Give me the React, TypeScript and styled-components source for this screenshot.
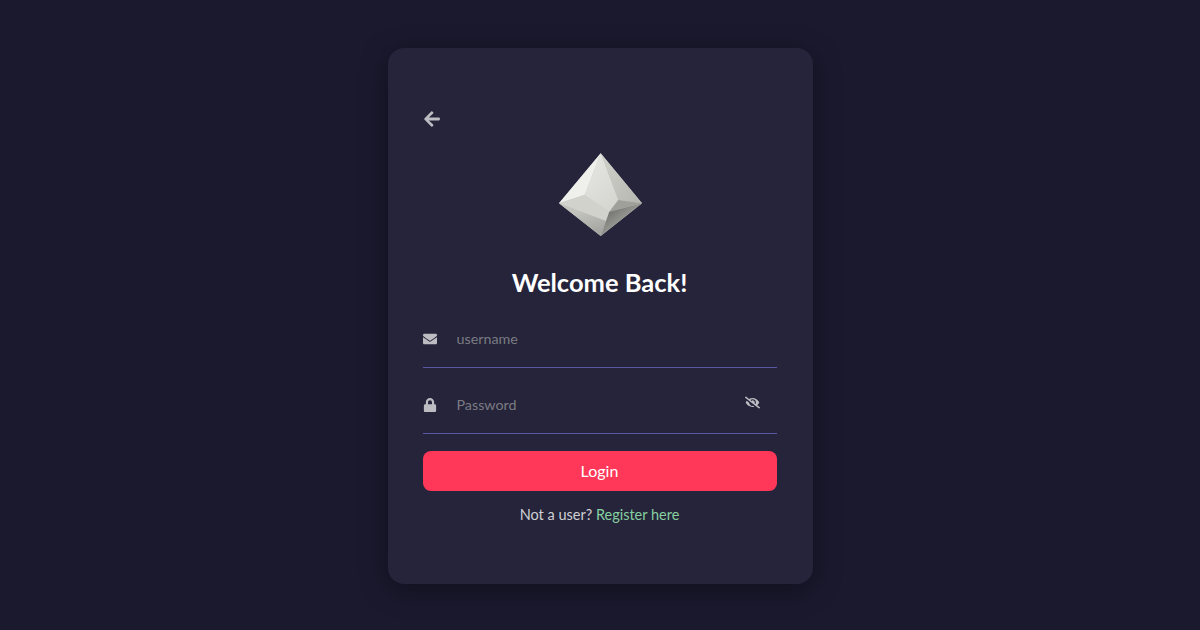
import { useState } from "react";
import styled, { createGlobalStyle } from "styled-components";
import { FaArrowLeft, FaEnvelope, FaEyeSlash, FaLock } from "react-icons/fa";

const GlobalStyle = createGlobalStyle`
  * {
    box-sizing: border-box;
  }
  body {
    margin: 0;
    background-color: #1a192e;
    font-family: Lato, "Noto Sans", sans-serif;
  }
`;

const Gem = () => (
  <GemSvg viewBox="0 0 84 84">
    <defs>
      <linearGradient id="center" x1="0.2" y1="0" x2="0.7" y2="1">
        <stop offset="0" stopColor="#e6e6e2" />
        <stop offset="1" stopColor="#d6d6d1" />
      </linearGradient>
      <linearGradient id="right" x1="0" y1="0" x2="1" y2="1">
        <stop offset="0" stopColor="#d2d2cd" />
        <stop offset="1" stopColor="#b6b6b1" />
      </linearGradient>
      <linearGradient id="lowerRight" x1="0.2" y1="0.1" x2="0.8" y2="0.7">
        <stop offset="0" stopColor="#6c6c68" />
        <stop offset="1" stopColor="#b2b2ad" />
      </linearGradient>
      <linearGradient id="lowerLeft" x1="0.3" y1="0.3" x2="0.6" y2="1">
        <stop offset="0" stopColor="#c4c4bf" />
        <stop offset="1" stopColor="#a4a4a0" />
      </linearGradient>
    </defs>
    <polygon points="42.7,0.3 84,50.3 42.7,83 1,50.3" fill="#c8c8c3" />
    <polygon points="42.7,0.3 1,50.3 26.3,42 28,38.7" fill="#efefeb" />
    <polygon points="42.7,0.3 28,38.7 26.3,42 51.3,58.7 60.3,47" fill="url(#center)" />
    <polygon points="42.7,0.3 60.3,47 84,50.3" fill="url(#right)" />
    <polygon points="1,50.3 26.3,42 51.3,58.7 48,68" fill="#d2d2cd" />
    <polygon points="1,50.3 48,68 42.7,83" fill="url(#lowerLeft)" />
    <polygon points="51.3,58.7 60.3,47 84,50.3" fill="#a0a09b" />
    <polygon points="51.3,58.7 84,50.3 42.7,83 48,68" fill="url(#lowerRight)" />
  </GemSvg>
);

export default function App() {
  const [username, setUsername] = useState("");
  const [password, setPassword] = useState("");

  return (
    <Page>
      <GlobalStyle />
      <Card>
        <BackButton type="button" aria-label="Back">
          <FaArrowLeft />
        </BackButton>
        <LogoWrap>
          <Gem />
        </LogoWrap>
        <Title>Welcome Back!</Title>
        <Field>
          <FieldIcon>
            <FaEnvelope />
          </FieldIcon>
          <Input
            placeholder="username"
            value={username}
            onChange={(e) => setUsername(e.target.value)}
          />
        </Field>
        <Field>
          <FieldIcon>
            <FaLock />
          </FieldIcon>
          <Input
            type="password"
            placeholder="Password"
            value={password}
            onChange={(e) => setPassword(e.target.value)}
          />
          <EyeButton type="button" aria-label="Show password">
            <FaEyeSlash />
          </EyeButton>
        </Field>
        <LoginButton type="button">Login</LoginButton>
        <Footer>
          Not a user? <RegisterLink href="#">Register here</RegisterLink>
        </Footer>
      </Card>
    </Page>
  );
}

const Page = styled.div`
  width: 100%;
  height: 630px;
  display: flex;
  justify-content: center;
  padding-top: 48px;
  overflow: hidden;
`;

const Card = styled.div`
  width: 425px;
  height: 536px;
  padding: 61px 36px 0 35px;
  background-color: #25243a;
  border-radius: 16px;
  box-shadow: 0 6px 28px rgba(0, 0, 0, 0.35);
  display: flex;
  flex-direction: column;
`;

const BackButton = styled.button`
  width: 18px;
  height: 20px;
  padding: 0;
  border: none;
  background: transparent;
  color: #bdbcc2;
  font-size: 18px;
  display: flex;
  align-items: center;
  cursor: pointer;
`;

const LogoWrap = styled.div`
  display: flex;
  justify-content: center;
  margin-top: 24px;
  padding-left: 1px;
`;

const GemSvg = styled.svg`
  width: 84px;
  height: 84px;
  display: block;
`;

const Title = styled.h1`
  margin: 28px 0 1px 0;
  height: 36px;
  line-height: 35px;
  text-align: center;
  color: #ffffff;
  font-size: 25.5px;
  font-weight: 700;
`;

const Field = styled.div`
  height: 66px;
  display: flex;
  align-items: center;
  padding-top: 9px;
  border-bottom: 1px solid #5a5aa4;
`;

const FieldIcon = styled.span`
  width: 34px;
  color: #bdbcc2;
  font-size: 14px;
  display: flex;
  align-items: center;
`;

const Input = styled.input`
  flex: 1;
  min-width: 0;
  margin-bottom: 2px;
  padding: 0;
  border: none;
  outline: none;
  background: transparent;
  color: #ffffff;
  font-family: inherit;
  font-size: 14.3px;
  &::placeholder {
    color: #7b7b83;
    opacity: 1;
  }
`;

const EyeButton = styled.button`
  width: 15px;
  margin-right: 17px;
  padding: 0;
  border: none;
  background: transparent;
  color: #bdbcc2;
  font-size: 15px;
  display: flex;
  align-items: center;
  position: relative;
  top: -3px;
  cursor: pointer;
`;

const LoginButton = styled.button`
  width: 100%;
  height: 40px;
  margin-top: 17px;
  padding-bottom: 2px;
  border: none;
  border-radius: 8px;
  background-color: #ff3758;
  color: #ffffff;
  font-family: inherit;
  font-size: 16px;
  font-weight: 400;
  cursor: pointer;
`;

const Footer = styled.p`
  margin: 14px 0 0 0;
  text-align: center;
  color: #d0d0d4;
  font-size: 14.5px;
  line-height: 20px;
`;

const RegisterLink = styled.a`
  color: #86d0a0;
  text-decoration: none;
`;
